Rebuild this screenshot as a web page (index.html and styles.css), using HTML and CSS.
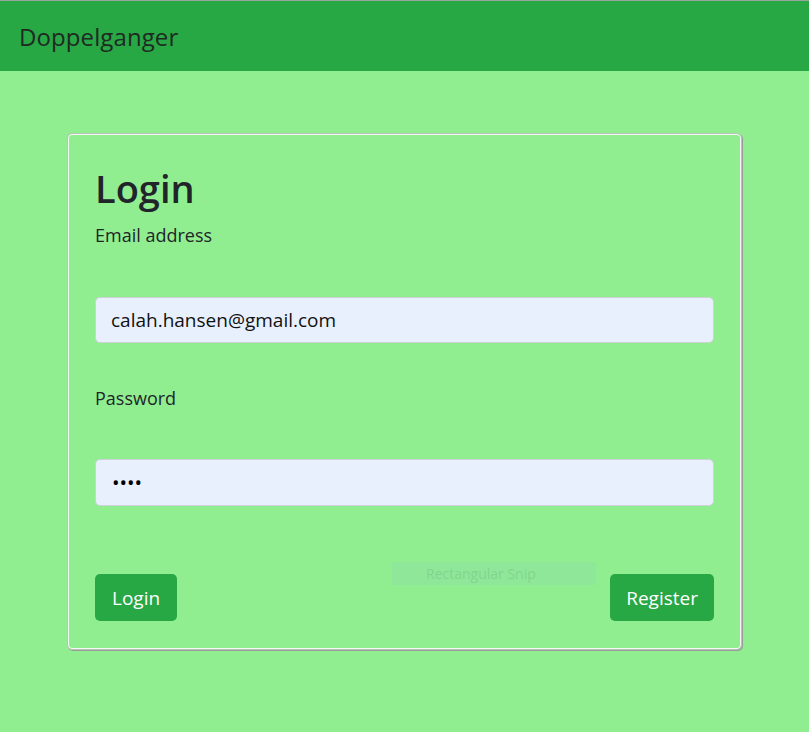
FILE: index.html
```html
<!DOCTYPE html>
<html>
<head>
<meta charset="utf-8">
<link rel="stylesheet" href="styles.css">
</head>
<body>
<nav class="navbar"><span class="brand">Doppelganger</span></nav>
<main class="page">
  <div class="card">
    <h2 class="title">Login</h2>
    <label class="label">Email address</label>
    <div class="input">calah.hansen@gmail.com</div>
    <label class="label label-pw">Password</label>
    <div class="input input-pw">••••</div>
    <div class="actions">
      <button class="btn btn-login">Login</button>
      <div class="snip">Rectangular Snip</div>
      <button class="btn">Register</button>
    </div>
  </div>
</main>
</body>
</html>
```
FILE: styles.css
```css
html, body { margin: 0; padding: 0; }
body {
  background: #90ee90;
  font-family: "Open Sans", "Noto Sans", sans-serif;
  color: #212529;
  height: 732px;
  overflow: hidden;
}
.navbar {
  background: #28a745;
  height: 71px;
  border-top: 1px solid #9aa59c;
  box-sizing: border-box;
  display: flex;
  align-items: center;
  padding-left: 19px;
}
.brand { font-size: 24px; color: #1f2a22; letter-spacing: 0.1px; }
.page { padding: 63px 68px 0 68px; }
.card {
  width: 673px;
  height: 515px;
  box-sizing: border-box;
  border: 1px solid #f4f8f4;
  border-radius: 4px;
  box-shadow: 0 0 0 1px #b9c4b9, 1px 1px 0 1px #9a9a9a;
  padding: 29px 26px 0 26px;
  display: flex;
  flex-direction: column;
}
.title { margin: 0; font-size: 38px; font-weight: 600; line-height: 48px; height: 48px; }
.label { font-size: 18px; line-height: 30px; margin-top: 8px; display: block; }
.input {
  margin-top: 47px;
  height: 46px;
  box-sizing: border-box;
  background: #e8f0fe;
  border: 1px solid #cdd2d6;
  border-radius: 5px;
  padding-left: 15px;
  display: flex;
  align-items: center;
  font-size: 19px;
  color: #111;
}
.label-pw { margin-top: 40px; }
.input-pw { margin-top: 46px; height: 47px; font-size: 20px; letter-spacing: 0; color: #000; padding-left: 16px; }
.actions {
  margin-top: 68px;
  display: flex;
  justify-content: space-between;
  align-items: flex-start;
  position: relative;
}
.btn {
  height: 47px;
  background: #28a745;
  color: #fff;
  border: none;
  border-radius: 5px;
  padding: 0 16px;
  font-family: inherit;
  font-size: 19px;
}
.btn-login { padding: 0 17px; }
.snip {
  position: absolute;
  left: 297px;
  top: -12px;
  width: 204px;
  height: 23px;
  box-sizing: border-box;
  padding-left: 34px;
  background: #8fe89a;
  color: #82d58e;
  font-size: 14px;
  line-height: 23px;
}
```
